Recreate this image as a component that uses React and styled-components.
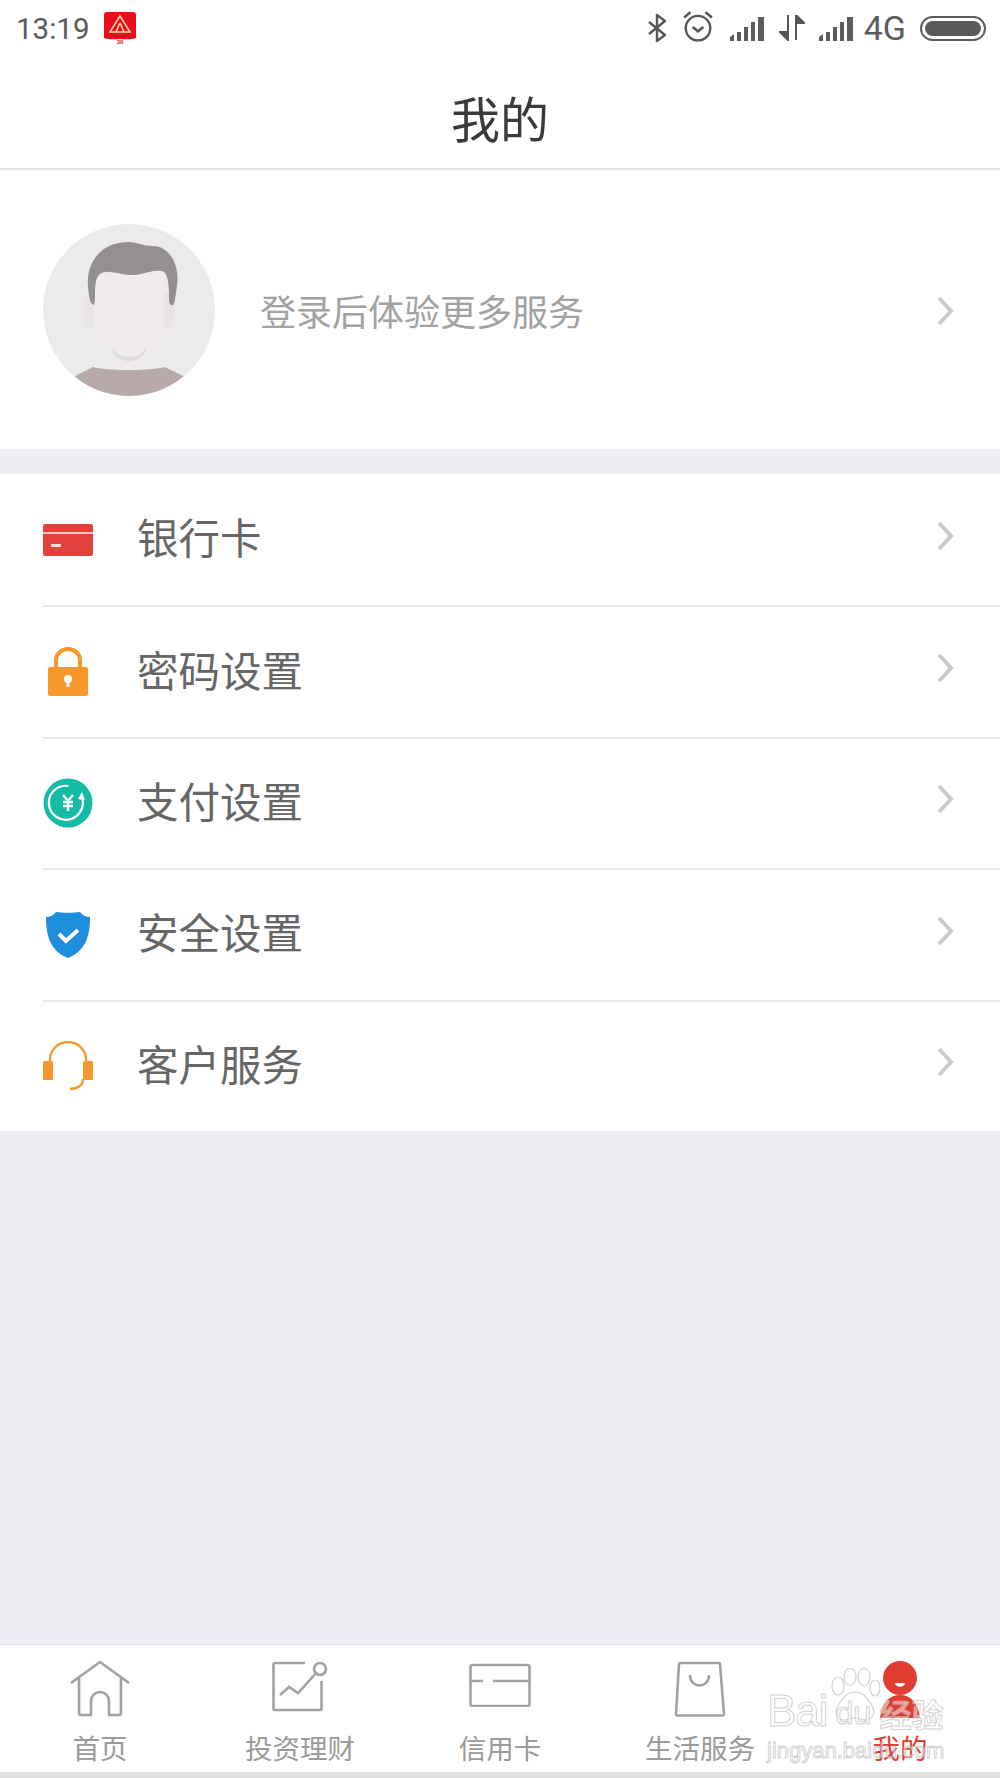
import React from "react";
import styled, { createGlobalStyle } from "styled-components";

const GlobalStyle = createGlobalStyle`
  html, body {
    margin: 0;
    padding: 0;
    background: #eeeff4;
  }
  * {
    box-sizing: border-box;
  }
`;

const FONT = `"Roboto", "Noto Sans CJK SC", sans-serif`;
const CJK = `"Noto Sans CJK SC", sans-serif`;

const Chevron = ({ $lift }) => (
  <ChevronSvg viewBox="0 0 18 30" width="18" height="30" $lift={$lift}>
    <path d="M3 2l12 13L3 28" fill="none" stroke="#cacaca" strokeWidth="4" />
  </ChevronSvg>
);

const CardIcon = () => (
  <svg viewBox="0 0 50 32" width="50" height="32">
    <rect width="50" height="32" rx="2" fill="#e2403a" />
    <rect y="8" width="50" height="2" fill="#f6c6c3" />
    <rect x="8" y="20" width="10" height="3" fill="#fbdedc" />
  </svg>
);

const LockIcon = () => (
  <svg viewBox="0 0 40 50" width="40" height="50">
    <path d="M8 21V13a12 11 0 0 1 24 0v8" fill="none" stroke="#f7982b" strokeWidth="4" />
    <rect y="20" width="40" height="29" rx="2" fill="#f7982b" />
    <circle cx="20" cy="32" r="4" fill="#fff" />
    <rect x="18.500" y="32" width="3" height="8" fill="#fff" />
  </svg>
);

const CoinIcon = () => (
  <svg viewBox="0 0 50 50" width="50" height="50">
    <circle cx="25" cy="25" r="24.500" fill="#15bba4" />
    <path d="M38 17a17 17 0 1 1-12-9" transform="rotate(-2 25 25)" fill="none" stroke="#fff" strokeWidth="2.200" />
    <path d="M39 14l3 8-7-1z" fill="#fff" />
    <path d="M20 17l5 6 5-6M25 23v10M20 24h10M20 28h10" fill="none" stroke="#fff" strokeWidth="2.400" />
  </svg>
);

const ShieldIcon = () => (
  <svg viewBox="0 0 46 48" width="46" height="48">
    <path d="M1 6c4 0 8-2 10-5 4 1 19 1 24 0 2 3 6 5 10 5 0 18-4 34-22 41C5 40 1 24 1 6z" fill="#1c8edb" />
    <path d="M14 23l7 7 12-11" fill="none" stroke="#fff" strokeWidth="4" />
  </svg>
);

const HeadsetIcon = () => (
  <svg viewBox="0 0 50 50" width="50" height="50">
    <path d="M7 21V19a18 18 0 0 1 36 0v2" fill="none" stroke="#f7982b" strokeWidth="2.400" />
    <rect y="20" width="10" height="19" rx="1.500" fill="#f7982b" />
    <rect x="40" y="20" width="10" height="19" rx="1.500" fill="#f7982b" />
    <path d="M40 38c0 6-5 10-13 10" fill="none" stroke="#f7982b" strokeWidth="2.400" />
  </svg>
);

const HomeIcon = () => (
  <svg viewBox="0 0 62 56" width="62" height="56">
    <path
      d="M2 22L31 1l29 21M10 17v35a2 2 0 0 0 2 2h10V40a9 9 0 0 1 18 0v14h10a2 2 0 0 0 2-2V17"
      fill="none" stroke="#a2a2a2" strokeWidth="2.600"
    />
  </svg>
);

const InvestIcon = () => (
  <svg viewBox="0 0 56 52" width="56" height="52">
    <path
      d="M33 2H3a1.500 1.500 0 0 0-1.500 1.500v44A1.500 1.500 0 0 0 3 49h45a1.500 1.500 0 0 0 1.500-1.500V20M8 34l9-8 9 6 19-21"
      fill="none" stroke="#a2a2a2" strokeWidth="2.600"
    />
    <circle cx="48" cy="8" r="6" fill="none" stroke="#a2a2a2" strokeWidth="2.600" />
  </svg>
);

const CreditIcon = () => (
  <svg viewBox="0 0 62 46" width="62" height="46">
    <rect x="1.500" y="4" width="59" height="41" rx="2" fill="none" stroke="#a2a2a2" strokeWidth="2.600" />
    <path d="M2 20h12M24 20h37" fill="none" stroke="#a2a2a2" strokeWidth="2.600" />
  </svg>
);

const BagIcon = () => (
  <svg viewBox="0 0 52 56" width="52" height="56">
    <path
      d="M6 2h39a1 1 0 0 1 1 1l4 50a1.500 1.500 0 0 1-1.500 1.500h-45A1.500 1.500 0 0 1 2 53L5 3a1 1 0 0 1 1-1z"
      fill="none" stroke="#a2a2a2" strokeWidth="2.600"
    />
    <path d="M16 14c0 14 19 14 19 0" fill="none" stroke="#a2a2a2" strokeWidth="2.600" />
  </svg>
);

const PersonIcon = () => (
  <svg viewBox="0 0 50 58" width="50" height="58">
    <ellipse cx="25" cy="17" rx="17" ry="17" fill="#e03e32" />
    <path d="M20 22h10c-1 5-9 5-10 0z" fill="#fff" />
    <path d="M25 34c11 0 18 8 20 23H5c2-15 9-23 20-23z" fill="#e03e32" />
  </svg>
);

const SignalIcon = () => (
  <svg viewBox="0 0 35 25" width="35" height="25">
    <path d="M0 25v-4l4-3v7zM7 25v-9h4v9zM14 25V11h4v14zM21 25V6h4v19zM28 25V1h6v24z" fill="#5c5c5c" />
  </svg>
);

const rows = [
  { label: "银行卡", icon: <CardIcon /> },
  { label: "密码设置", icon: <LockIcon /> },
  { label: "支付设置", icon: <CoinIcon /> },
  { label: "安全设置", icon: <ShieldIcon /> },
  { label: "客户服务", icon: <HeadsetIcon /> },
];

const tabs = [
  { label: "首页", icon: <HomeIcon /> },
  { label: "投资理财", icon: <InvestIcon /> },
  { label: "信用卡", icon: <CreditIcon /> },
  { label: "生活服务", icon: <BagIcon /> },
  { label: "我的", icon: <PersonIcon />, active: true },
];

const App = () => {
  return (
    <Page>
      <GlobalStyle />
      <StatusBar>
        <StatusLeft>
          <Time>13:19</Time>
          <svg viewBox="0 0 32 32" width="32" height="32">
            <path d="M3 0h26a3 3 0 0 1 3 3v23c-5 2-11 1-16 1s-11 1-16-1V3a3 3 0 0 1 3-3z" fill="#e60f1e" />
            <path d="M16 4L6 20h20zM16 11l-4 9M16 11l4 9" fill="none" stroke="#f7cfa8" strokeWidth="1.600" />
            <text x="16" y="32" textAnchor="middle" fontSize="6" fontWeight="700" fontFamily="Liberation Sans, sans-serif" fill="#c8161d">30</text>
          </svg>
        </StatusLeft>
        <StatusRight>
          <BluetoothSvg viewBox="0 0 18 28" width="18" height="28">
            <path d="M1 8l16 13-8 6V1l8 6L1 20" fill="none" stroke="#555" strokeWidth="2.400" />
          </BluetoothSvg>
          <AlarmSvg viewBox="0 0 30 30" width="32" height="32">
            <circle cx="15" cy="17" r="11.500" fill="none" stroke="#555" strokeWidth="2.200" />
            <path d="M10 16l5 4 5-4M2 7l6-5M28 7l-6-5" fill="none" stroke="#555" strokeWidth="2.400" />
          </AlarmSvg>
          <SignalIcon />
          <svg viewBox="0 0 26 26" width="26" height="26">
            <path d="M9 0v25L1 17h8M17 25V0l8 8h-8" fill="#555" stroke="#555" strokeWidth="2" />
          </svg>
          <SignalIcon />
          <NetworkLabel>4G</NetworkLabel>
          <Battery>
            <BatteryFill />
          </Battery>
        </StatusRight>
      </StatusBar>

      <NavBar>
        <NavTitle>我的</NavTitle>
      </NavBar>

      <Profile>
        <svg viewBox="0 0 172 172" width="172" height="172">
          <defs>
            <clipPath id="avatar-clip">
              <circle cx="86" cy="86" r="86" />
            </clipPath>
          </defs>
          <circle cx="86" cy="86" r="86" fill="#ebebeb" />
          <g clipPath="url(#avatar-clip)">
            <ellipse cx="48" cy="86" rx="8" ry="18" fill="#e9e5e5" />
            <ellipse cx="124" cy="86" rx="8" ry="18" fill="#e9e5e5" />
            <path d="M51 50h70v50c0 20-18 34-35 34s-35-14-35-34z" fill="#f0ecec" />
            <path d="M70 124h32v22H70z" fill="#f0ecec" />
            <path d="M70 124c5 12 27 12 32 0v4c-6 12-26 12-32 0z" fill="#dcdcdc" />
            <path d="M50 143c12 4 60 4 72 0l40 20v12H10v-12z" fill="#b9aaaa" />
            <path
              d="M51 81c-3-1-4-4-5-10-6-30 10-53 40-53 8 0 14 4 24 4 17 0 27 20 24 39-1 8-2 18-4 20-3 1-4-1-4-8 0-14-1-24-7-26-12-2-20 5-33 4-12-1-22-6-29-1-5 4-5 13-5 24 0 5-1 7-1 7z"
              fill="#949090"
            />
          </g>
        </svg>
        <ProfileText>登录后体验更多服务</ProfileText>
        <Chevron />
      </Profile>

      <MenuList>
        {rows.map((row, i) => (
          <MenuRow key={row.label} $first={i === 0}>
            <MenuIcon>{row.icon}</MenuIcon>
            <MenuLabel>{row.label}</MenuLabel>
            <Chevron $lift />
          </MenuRow>
        ))}
      </MenuList>

      <Spacer />

      <TabBar>
        {tabs.map((tab) => (
          <Tab key={tab.label}>
            <TabIcon>{tab.icon}</TabIcon>
            <TabLabel $active={tab.active}>{tab.label}</TabLabel>
          </Tab>
        ))}
      </TabBar>
      <BottomStrip />

      <Watermark>
        <WatermarkTop>
          <WatermarkBrand>Bai</WatermarkBrand>
          <PawBlock>
            <svg viewBox="0 0 50 56" width="50" height="56">
              <g fill="rgba(255,255,255,0.5)" stroke="rgba(170,170,170,0.55)" strokeWidth="1.200">
                <ellipse cx="8" cy="18" rx="6" ry="9" />
                <ellipse cx="20" cy="9" rx="6" ry="8.500" />
                <ellipse cx="34" cy="9" rx="6" ry="8.500" />
                <ellipse cx="45" cy="20" rx="5" ry="8" />
                <path d="M25 24c8 0 12 6 16 12 5 7 3 16-6 16-4 0-6-2-10-2s-6 2-10 2c-9 0-11-9-6-16 4-6 8-12 16-12z" />
              </g>
            </svg>
            <WatermarkDu>du</WatermarkDu>
          </PawBlock>
          <WatermarkCjk>经验</WatermarkCjk>
        </WatermarkTop>
        <WatermarkUrl>jingyan.baidu.com</WatermarkUrl>
      </Watermark>
    </Page>
  );
};

const Page = styled.div`
  position: relative;
  width: 1000px;
  height: 1778px;
  display: flex;
  flex-direction: column;
  background: #eeeff4;
  font-family: ${FONT};
  overflow: hidden;
`;

const StatusBar = styled.div`
  height: 56px;
  padding: 12px 14px 0 16px;
  display: flex;
  justify-content: space-between;
  align-items: flex-start;
  background: #fff;
`;

const StatusLeft = styled.div`
  display: flex;
  align-items: flex-start;
  gap: 15px;
`;

const Time = styled.span`
  font-size: 29.500px;
  line-height: 34px;
  color: #5a5a5a;
`;

const StatusRight = styled.div`
  display: flex;
  align-items: center;
  gap: 14px;
  height: 32px;
`;

const BluetoothSvg = styled.svg`
  margin-right: 2px;
`;

const AlarmSvg = styled.svg`
  margin-right: 2px;
  margin-top: -4px;
`;

const NetworkLabel = styled.span`
  font-size: 34px;
  line-height: 32px;
  color: #5c5c5c;
  margin-left: -4px;
`;

const Battery = styled.div`
  width: 66px;
  height: 25px;
  padding: 3px;
  border: 2px solid #5c5c5c;
  border-radius: 13px;
`;

const BatteryFill = styled.div`
  height: 100%;
  background: #5a5a5a;
  border-radius: 8px;
`;

const NavBar = styled.div`
  height: 114px;
  padding-top: 8px;
  display: flex;
  align-items: center;
  justify-content: center;
  background: #fff;
  border-bottom: 2px solid #e2e2e2;
`;

const NavTitle = styled.h1`
  margin: 0;
  font-family: ${CJK};
  font-size: 49px;
  font-weight: 400;
  color: #3a3a3a;
`;

const Profile = styled.div`
  height: 279px;
  padding: 0 46px 0 43px;
  display: flex;
  align-items: center;
  background: #fff;
`;

const ProfileText = styled.span`
  flex: 1;
  margin-left: 45px;
  font-family: ${CJK};
  font-size: 36px;
  color: #a2a2a2;
`;

const ChevronSvg = styled.svg`
  flex: none;
  margin-top: ${(p) => (p.$lift ? "-8px" : "2px")};
`;

const MenuList = styled.div`
  margin-top: 25px;
  padding-left: 43px;
  background: #fff;
`;

const MenuRow = styled.div`
  height: 131.400px;
  padding-right: 46px;
  display: flex;
  align-items: center;
  border-top: ${(p) => (p.$first ? "none" : "2px solid #e8e8e8")};
`;

const MenuIcon = styled.div`
  width: 50px;
  display: flex;
  justify-content: center;
`;

const MenuLabel = styled.span`
  flex: 1;
  margin: -7px 0 0 44px;
  font-family: ${CJK};
  font-size: 41.500px;
  color: #666;
`;

const Spacer = styled.div`
  flex: 1;
`;

const TabBar = styled.div`
  height: 128px;
  display: grid;
  grid-template-columns: repeat(5, 200px);
  background: #fff;
  border-top: 1px solid #e4e4e4;
`;

const Tab = styled.div`
  display: flex;
  flex-direction: column;
  align-items: center;
`;

const TabIcon = styled.div`
  height: 82px;
  padding-top: 16px;
  display: flex;
  justify-content: center;
  align-items: flex-start;
`;

const TabLabel = styled.span`
  font-family: ${CJK};
  font-size: 27.500px;
  line-height: 40px;
  color: ${(p) => (p.$active ? "#e03e32" : "#9a9a9a")};
`;

const BottomStrip = styled.div`
  height: 6px;
  background: #e0e0e0;
`;

const Watermark = styled.div`
  position: absolute;
  left: 767px;
  top: 1668px;
  width: 190px;
  color: rgba(255, 255, 255, 0.5);
  -webkit-text-stroke: 1px rgba(170, 170, 170, 0.55);
  pointer-events: none;
`;

const WatermarkTop = styled.div`
  display: flex;
  align-items: flex-end;
  height: 68px;
`;

const WatermarkBrand = styled.span`
  font-family: "Liberation Sans", sans-serif;
  font-size: 44px;
  line-height: 50px;
  white-space: nowrap;
  letter-spacing: -1px;
`;

const PawBlock = styled.div`
  position: relative;
  flex: none;
  width: 50px;
  height: 68px;
  margin-left: 2px;
`;

const WatermarkDu = styled.span`
  position: absolute;
  left: 6px;
  bottom: 4px;
  font-family: "Liberation Sans", sans-serif;
  font-size: 32px;
  font-weight: 400;
`;

const WatermarkCjk = styled.span`
  font-family: ${CJK};
  font-size: 32px;
  font-weight: 700;
  line-height: 46px;
  white-space: nowrap;
`;

const WatermarkUrl = styled.div`
  font-family: "Liberation Sans", sans-serif;
  font-size: 22px;
  line-height: 30px;
  white-space: nowrap;
`;

export default App;
